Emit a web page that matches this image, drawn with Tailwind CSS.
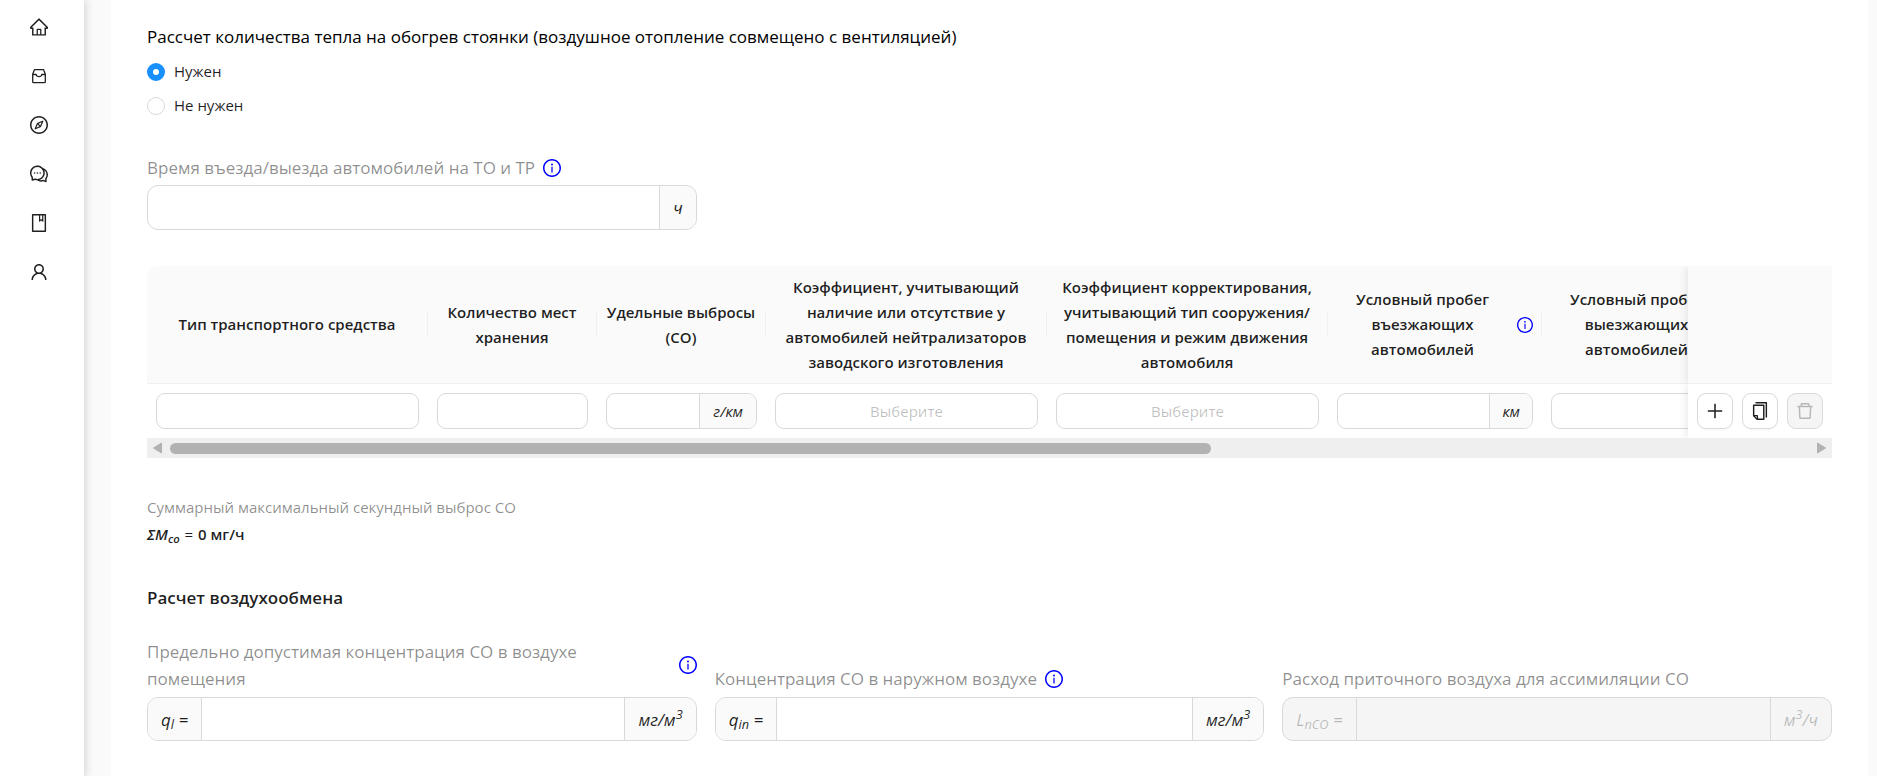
<!DOCTYPE html>
<html lang="ru">
<head>
    <meta charset="UTF-8">
    <meta name="viewport" content="width=device-width, initial-scale=1.0">
    <title>Расчет воздухообмена</title>
    <script src="https://cdn.jsdelivr.net/npm/@tailwindcss/browser@4"></script>
</head>
<body class="min-h-screen bg-[#fafafa] flex overflow-x-hidden font-['Open_Sans','Noto_Sans',sans-serif] text-[15px] leading-[25px] text-black/88">

    <!-- Icons used more than once -->
    <svg class="hidden">
        <symbol id="info" viewBox="64 64 896 896">
            <path d="M512 64C264.6 64 64 264.6 64 512s200.6 448 448 448 448-200.6 448-448S759.4 64 512 64zm0 820c-205.4 0-372-166.6-372-372s166.6-372 372-372 372 166.6 372 372-166.6 372-372 372z"/>
            <path d="M464 336a48 48 0 1096 0 48 48 0 10-96 0zm72 112h-48c-4.4 0-8 3.6-8 8v272c0 4.4 3.6 8 8 8h48c4.4 0 8-3.6 8-8V456c0-4.4-3.6-8-8-8z"/>
        </symbol>
    </svg>

    <!-- Sidebar -->
    <aside class="relative z-10 w-[84px] shrink-0 bg-white shadow-[2px_0_8px_rgba(0,0,0,0.15)]">
        <nav class="flex flex-col items-center gap-[31px] pt-[18px] pr-[6px]">
            <a href="#" aria-label="Главная">
                <svg class="size-[18px]" viewBox="64 64 896 896" fill="currentColor"><path d="M946.5 505L560.1 118.8l-25.9-25.9a31.5 31.5 0 00-44.4 0L77.5 505a63.9 63.9 0 00-18.8 46c.4 35.2 29.7 63.3 64.9 63.3h42.5V940h691.8V614.3h43.4c17.1 0 33.2-6.7 45.3-18.8a63.6 63.6 0 0018.7-45.3c0-17-6.7-33.1-18.8-45.2zM568 868H456V664h112v204zm217.9-325.7V868H632V640c0-22.1-17.9-40-40-40H432c-22.1 0-40 17.9-40 40v228H238.1V542.3h-96l370-369.7 23.1 23.1L882 542.3h-96.1z"/></svg>
            </a>
            <a href="#" aria-label="Проекты">
                <svg class="size-[18px]" viewBox="0 0 18 18" fill="none" stroke="currentColor" stroke-width="1.3" stroke-linejoin="round"><path d="M4.8 2.7h8.4q.5 0 .6.5l1.5 4.1v7.4q0 .9-.9.9H3.600q-.9 0-.9-.9V7.300l1.500-4.100q.1-.5.6-.5zM2.700 7.500h3.500q.4 2.100 2.800 2.100t2.800-2.100h3.500"/></svg>
            </a>
            <a href="#" aria-label="Обзор">
                <svg class="size-[18px]" viewBox="64 64 896 896" fill="currentColor"><path d="M512 64C264.6 64 64 264.6 64 512s200.6 448 448 448 448-200.6 448-448S759.4 64 512 64zm0 820c-205.4 0-372-166.6-372-372s166.6-372 372-372 372 166.6 372 372-166.6 372-372 372zm198.4-588.1a32 32 0 00-24.5.5L414.9 415 296.4 686c-3.6 8.2-3.6 17.5 0 25.7 3.4 7.8 9.7 13.9 17.7 17 3.8 1.5 7.7 2.2 11.7 2.2 4.4 0 8.7-.9 12.8-2.7l271-118.6 118.5-271a32.06 32.06 0 00-17.7-42.7zM576.8 534.4l26.2 26.2-42.4 42.4-26.2-26.2L380 644.4 447.5 490 422 464.4l42.4-42.4 25.5 25.5L644.4 380l-67.6 154.400zM464.400 422L422 464.400l25.500 25.600 86.900 86.800 26.200 26.200 42.400-42.400-26.200-26.200-86.800-86.900z"/></svg>
            </a>
            <a href="#" aria-label="Сообщения">
                <svg class="size-[18px]" viewBox="64 64 896 896" fill="currentColor"><circle cx="573" cy="461" r="40"/><circle cx="293" cy="461" r="40"/><circle cx="433" cy="461" r="40"/><path d="M894 345a343.92 343.92 0 00-189-130v.1c-17.1-19-36.4-36.5-58-52.1-163.7-119-393.5-82.7-513 81-96.3 133-92.2 311.9 6 439l.8 132.6c0 3.2.5 6.4 1.5 9.4a31.95 31.95 0 0040.1 20.9L309 806c33.5 11.9 68.1 18.7 102.5 20.6l-.5.4c89.1 64.9 205.9 84.4 313 49l127.1 41.4c3.2 1 6.5 1.6 9.9 1.6 17.7 0 32-14.3 32-32V753c88.1-119.6 90.4-284.9 1-408zM323 735l-12-5-99 31-1-104-8-9c-84.6-103.2-90.2-251.9-11-361 96.4-132.2 281.2-161.4 413-66 132.2 96.1 161.5 280.6 66 412-80.1 109.9-223.5 150.5-348 102zm505-17l-8 10 1 104-98-33-12 5c-56 20.8-115.7 22.5-171 7l-.2-.1A367.31 367.31 0 00729 676c76.4-105.3 88.8-237.6 44.4-350.4l.6.4c23 16.5 44.1 37.1 62 62 72.6 99.6 68.5 235.2-8 330z"/></svg>
            </a>
            <a href="#" aria-label="Справочник">
                <svg class="size-[18px]" viewBox="64 64 896 896" fill="currentColor"><path d="M832 64H192c-17.7 0-32 14.3-32 32v832c0 17.7 14.3 32 32 32h640c17.7 0 32-14.3 32-32V96c0-17.7-14.3-32-32-32zm-260 72h96v209.9L621.5 312 572 347.4V136zm220 752H232V136h280v296.9c0 3.3 1 6.6 3 9.3a15.9 15.9 0 0022.3 3.7l83.8-59.9 81.4 59.4c2.7 2 6 3.1 9.4 3.1 8.8 0 16-7.2 16-16V136h64v752z"/></svg>
            </a>
            <a href="#" aria-label="Профиль">
                <svg class="size-[18px]" viewBox="64 64 896 896" fill="currentColor"><path d="M858.5 763.6a374 374 0 00-80.6-119.5 375.63 375.63 0 00-119.5-80.6c-.4-.2-.8-.3-1.2-.5C719.5 518 760 444.7 760 362c0-137-111-248-248-248S264 225 264 362c0 82.7 40.5 156 102.8 201.1-.4.2-.8.3-1.2.5-44.8 18.9-85 46-119.5 80.6a375.63 375.63 0 00-80.6 119.5A371.7 371.7 0 00136 901.8a8 8 0 008 8.2h60c4.4 0 7.9-3.5 8-7.8 2-77.2 33-149.5 87.8-204.3 56.7-56.7 132-87.9 212.2-87.9s155.5 31.2 212.2 87.9C779 752.7 810 825 812 902.2c.1 4.4 3.6 7.8 8 7.8h60a8 8 0 008-8.2c-1-47.8-10.9-94.3-29.5-138.2zM512 534c-45.9 0-89.1-17.9-121.6-50.4S340 407.9 340 362c0-45.9 17.9-89.1 50.4-121.6S466.1 190 512 190s89.1 17.9 121.6 50.4S684 316.1 684 362c0 45.9-17.9 89.1-50.4 121.6S557.9 534 512 534z"/></svg>
            </a>
        </nav>
    </aside>

    <main class="ml-[27px] mr-[9px] min-w-0 flex-1 bg-white px-9 pt-[23px]">

        <!-- Heating choice -->
        <fieldset>
            <legend class="text-[17px] leading-[27px] text-black">Рассчет количества тепла на обогрев стоянки (воздушное отопление совмещено с вентиляцией)</legend>
            <div class="mt-[9px] flex flex-col gap-[9px]">
                <label class="flex items-center gap-[9px]">
                    <input type="radio" name="heat" checked class="size-[18px] appearance-none rounded-full border border-[#d9d9d9] checked:border-[6px] checked:border-[#1890ff]">
                    Нужен
                </label>
                <label class="flex items-center gap-[9px]">
                    <input type="radio" name="heat" class="size-[18px] appearance-none rounded-full border border-[#d9d9d9] checked:border-[6px] checked:border-[#1890ff]">
                    Не нужен
                </label>
            </div>
        </fieldset>

        <!-- Entry / exit time -->
        <div class="mt-9 grid grid-cols-3 gap-[18px]">
            <div>
                <div class="flex items-center gap-2">
                    <label for="time" class="text-[17px] leading-[27px] text-black/45">Время въезда/выезда автомобилей на ТО и ТР</label>
                    <svg class="size-[18px] shrink-0 fill-[#00f]"><use href="#info"/></svg>
                </div>
                <div class="mt-1 flex h-[45px] overflow-hidden rounded-[11px] border border-[#d9d9d9]">
                    <input id="time" type="text" class="min-w-0 flex-1 px-3 outline-none">
                    <span class="flex items-center border-l border-[#d9d9d9] bg-[#fafafa] px-[13px] text-[17px] italic">ч</span>
                </div>
            </div>
        </div>

        <!-- Vehicles table -->
        <div class="mt-9">
            <div class="overflow-hidden rounded-tl-[11px]">
                <table class="w-[2660px] table-fixed border-separate border-spacing-0">
                    <colgroup>
                        <col class="w-[281px]">
                        <col class="w-[169px]">
                        <col class="w-[169px]">
                        <col class="w-[281px]">
                        <col class="w-[281px]">
                        <col class="w-[214px]">
                        <col class="w-[214px]">
                        <col>
                        <col class="w-[144px]">
                    </colgroup>
                    <thead>
                        <tr class="h-[118px] bg-[#fafafa]">
                            <th class="border-b border-[#f0f0f0] p-0 font-semibold">
                                <div class="flex items-center"><span class="flex-1 px-2">Тип транспортного средства</span><i class="h-[25px] w-px bg-[#f0f0f0]"></i></div>
                            </th>
                            <th class="border-b border-[#f0f0f0] p-0 font-semibold">
                                <div class="flex items-center"><span class="flex-1 px-2">Количество мест хранения</span><i class="h-[25px] w-px bg-[#f0f0f0]"></i></div>
                            </th>
                            <th class="border-b border-[#f0f0f0] p-0 font-semibold">
                                <div class="flex items-center"><span class="flex-1 px-2">Удельные выбросы (СО)</span><i class="h-[25px] w-px bg-[#f0f0f0]"></i></div>
                            </th>
                            <th class="border-b border-[#f0f0f0] p-0 font-semibold">
                                <div class="flex items-center"><span class="flex-1 px-2">Коэффициент, учитывающий наличие или отсутствие у автомобилей нейтрализаторов заводского изготовления</span><i class="h-[25px] w-px bg-[#f0f0f0]"></i></div>
                            </th>
                            <th class="border-b border-[#f0f0f0] p-0 font-semibold">
                                <div class="flex items-center"><span class="flex-1 px-2">Коэффициент корректирования, учитывающий тип сооружения/<wbr>помещения и режим движения автомобиля</span><i class="h-[25px] w-px bg-[#f0f0f0]"></i></div>
                            </th>
                            <th class="border-b border-[#f0f0f0] p-0 font-semibold">
                                <div class="flex items-center"><span class="flex-1 px-2">Условный пробег въезжающих автомобилей</span><svg class="mr-2 size-4 shrink-0 fill-[#00f]"><use href="#info"/></svg><i class="h-[25px] w-px bg-[#f0f0f0]"></i></div>
                            </th>
                            <th class="border-b border-[#f0f0f0] p-0 font-semibold">
                                <div class="flex items-center"><span class="flex-1 px-2">Условный пробег выезжающих автомобилей</span><svg class="mr-2 size-4 shrink-0 fill-[#00f]"><use href="#info"/></svg><i class="h-[25px] w-px bg-[#f0f0f0]"></i></div>
                            </th>
                            <th class="border-b border-[#f0f0f0] p-0"></th>
                            <th class="sticky right-0 border-b border-[#f0f0f0] bg-[#fafafa] p-0 shadow-[0_0_10px_rgba(5,5,5,0.12)] [clip-path:inset(0_0_0_-12px)]"></th>
                        </tr>
                    </thead>
                    <tbody>
                        <tr class="h-[54px]">
                            <td class="px-[9px] py-0">
                                <input type="text" aria-label="Тип транспортного средства" class="block h-9 w-full rounded-[9px] border border-[#d9d9d9] px-3">
                            </td>
                            <td class="px-[9px] py-0">
                                <input type="text" aria-label="Количество мест хранения" class="block h-9 w-full rounded-[9px] border border-[#d9d9d9] px-3">
                            </td>
                            <td class="px-[9px] py-0">
                                <div class="flex h-9 overflow-hidden rounded-[9px] border border-[#d9d9d9]">
                                    <input type="text" aria-label="Удельные выбросы (СО)" class="min-w-0 flex-1 px-3">
                                    <span class="flex items-center border-l border-[#d9d9d9] bg-[#fafafa] px-[13px] italic">г/км</span>
                                </div>
                            </td>
                            <td class="px-[9px] py-0">
                                <select aria-label="Коэффициент нейтрализаторов" class="block h-9 w-full appearance-none rounded-[9px] border border-[#d9d9d9] text-center text-black/25">
                                    <option>Выберите</option>
                                </select>
                            </td>
                            <td class="px-[9px] py-0">
                                <select aria-label="Коэффициент корректирования" class="block h-9 w-full appearance-none rounded-[9px] border border-[#d9d9d9] text-center text-black/25">
                                    <option>Выберите</option>
                                </select>
                            </td>
                            <td class="px-[9px] py-0">
                                <div class="flex h-9 overflow-hidden rounded-[9px] border border-[#d9d9d9]">
                                    <input type="text" aria-label="Условный пробег въезжающих автомобилей" class="min-w-0 flex-1 px-3">
                                    <span class="flex items-center border-l border-[#d9d9d9] bg-[#fafafa] px-3 italic">км</span>
                                </div>
                            </td>
                            <td class="px-[9px] py-0">
                                <div class="flex h-9 overflow-hidden rounded-[9px] border border-[#d9d9d9]">
                                    <input type="text" aria-label="Условный пробег выезжающих автомобилей" class="min-w-0 flex-1 px-3">
                                    <span class="flex items-center border-l border-[#d9d9d9] bg-[#fafafa] px-3 italic">км</span>
                                </div>
                            </td>
                            <td></td>
                            <td class="sticky right-0 bg-white px-[9px] py-0 shadow-[0_0_10px_rgba(5,5,5,0.12)] [clip-path:inset(0_0_0_-12px)]">
                                <div class="flex gap-[9px]">
                                    <button type="button" aria-label="Добавить" class="flex size-9 items-center justify-center rounded-[9px] border border-[#d9d9d9] shadow-[0_2px_0_rgba(0,0,0,0.02)]">
                                        <svg class="size-[18px]" viewBox="64 64 896 896" fill="currentColor"><path d="M482 152h60q8 0 8 8v704q0 8-8 8h-60q-8 0-8-8V160q0-8 8-8zM160 474h704q8 0 8 8v60q0 8-8 8H160q-8 0-8-8v-60q0-8 8-8z"/></svg>
                                    </button>
                                    <button type="button" aria-label="Копировать" class="flex size-9 items-center justify-center rounded-[9px] border border-[#d9d9d9] shadow-[0_2px_0_rgba(0,0,0,0.02)]">
                                        <svg class="size-[18px]" viewBox="64 64 896 896" fill="currentColor"><path d="M832 64H296c-4.4 0-8 3.6-8 8v56c0 4.4 3.6 8 8 8h496v688c0 4.4 3.6 8 8 8h56c4.4 0 8-3.6 8-8V96c0-17.7-14.3-32-32-32zM704 192H192c-17.7 0-32 14.3-32 32v530.7c0 8.5 3.4 16.6 9.4 22.6l173.3 173.3c2.2 2.2 4.7 4 7.4 5.5v1.9h4.2c3.5 1.3 7.2 2 11 2H704c17.7 0 32-14.3 32-32V224c0-17.7-14.3-32-32-32zM350 856.2L263.9 770H350v86.2zM664 888H414V746c0-22.1-17.9-40-40-40H232V264h432v624z"/></svg>
                                    </button>
                                    <button type="button" disabled aria-label="Удалить" class="flex size-9 items-center justify-center rounded-[9px] border border-[#d9d9d9] bg-[#f5f5f5] text-black/25">
                                        <svg class="size-[18px]" viewBox="64 64 896 896" fill="currentColor"><path d="M360 184h-8c4.4 0 8-3.6 8-8v8h304v-8c0 4.4 3.6 8 8 8h-8v72h72v-80c0-35.3-28.7-64-64-64H352c-35.3 0-64 28.7-64 64v80h72v-72zm504 72H160c-17.7 0-32 14.3-32 32v32c0 4.4 3.6 8 8 8h60.4l24.7 523c1.6 34.1 29.8 61 63.9 61h454c34.2 0 62.3-26.8 63.9-61l24.7-523H888c4.4 0 8-3.6 8-8v-32c0-17.7-14.3-32-32-32zM731.3 840H292.7l-24.2-512h487l-24.2 512z"/></svg>
                                    </button>
                                </div>
                            </td>
                        </tr>
                    </tbody>
                </table>
            </div>
            <!-- Horizontal scrollbar -->
            <div class="flex h-5 items-center bg-[#efefef] px-[5px]">
                <svg class="h-3 w-[11px] fill-[#b2b2b2] stroke-[#b2b2b2]" viewBox="0 0 11 12" stroke-linejoin="round"><path d="M9.500 1v10L1.500 6z"/></svg>
                <div class="mx-[7px] flex-1"><div class="h-[11px] w-[63.5%] rounded-full bg-[#b2b2b2]"></div></div>
                <svg class="h-3 w-[11px] fill-[#b2b2b2] stroke-[#b2b2b2]" viewBox="0 0 11 12" stroke-linejoin="round"><path d="M1.500 1v10l8-5z"/></svg>
            </div>
        </div>

        <!-- Total emission -->
        <div class="mt-9 leading-[27px]">
            <p class="text-black/45">Суммарный максимальный секундный выброс СО</p>
            <p class="font-semibold"><i>ΣM<sub>co</sub></i> <span class="px-px font-normal">=</span> 0 мг/ч</p>
        </div>

        <h2 class="mt-9 text-[17px] leading-[27px] font-semibold">Расчет воздухообмена</h2>

        <!-- Air exchange -->
        <div class="mt-[27px] grid grid-cols-3 items-end gap-[18px] pb-9">
            <div>
                <div class="flex items-center justify-between gap-2">
                    <label for="ql" class="text-[17px] leading-[27px] text-black/45">Предельно допустимая концентрация СО в воздухе помещения</label>
                    <svg class="size-[18px] shrink-0 fill-[#00f]"><use href="#info"/></svg>
                </div>
                <div class="mt-[5px] flex h-11 overflow-hidden rounded-[11px] border border-[#d9d9d9] text-[17px] italic">
                    <span class="flex items-center border-r border-[#d9d9d9] bg-[#fafafa] px-[13px]"><span>q<sub>l</sub> =</span></span>
                    <input id="ql" type="text" class="min-w-0 flex-1 px-3">
                    <span class="flex items-center border-l border-[#d9d9d9] bg-[#fafafa] px-[13px]"><span>мг/м<sup>3</sup></span></span>
                </div>
            </div>
            <div>
                <div class="flex items-center gap-2">
                    <label for="qin" class="text-[17px] leading-[27px] text-black/45">Концентрация СО в наружном воздухе</label>
                    <svg class="size-[18px] shrink-0 fill-[#00f]"><use href="#info"/></svg>
                </div>
                <div class="mt-[5px] flex h-11 overflow-hidden rounded-[11px] border border-[#d9d9d9] text-[17px] italic">
                    <span class="flex items-center border-r border-[#d9d9d9] bg-[#fafafa] px-[13px]"><span>q<sub>in</sub> =</span></span>
                    <input id="qin" type="text" class="min-w-0 flex-1 px-3">
                    <span class="flex items-center border-l border-[#d9d9d9] bg-[#fafafa] px-[13px]"><span>мг/м<sup>3</sup></span></span>
                </div>
            </div>
            <div>
                <label for="lnco" class="block text-[17px] leading-[27px] text-black/45">Расход приточного воздуха для ассимиляции СО</label>
                <div class="mt-[5px] flex h-11 overflow-hidden rounded-[11px] border border-[#d9d9d9] bg-[#f5f5f5] text-[17px] text-black/25 italic">
                    <span class="flex items-center border-r border-[#d9d9d9] px-[13px]"><span>L<sub>nCO</sub> =</span></span>
                    <input id="lnco" type="text" disabled class="min-w-0 flex-1 px-3">
                    <span class="flex items-center border-l border-[#d9d9d9] px-[13px]"><span>м<sup>3</sup>/ч</span></span>
                </div>
            </div>
        </div>
    </main>

</body>
</html>
